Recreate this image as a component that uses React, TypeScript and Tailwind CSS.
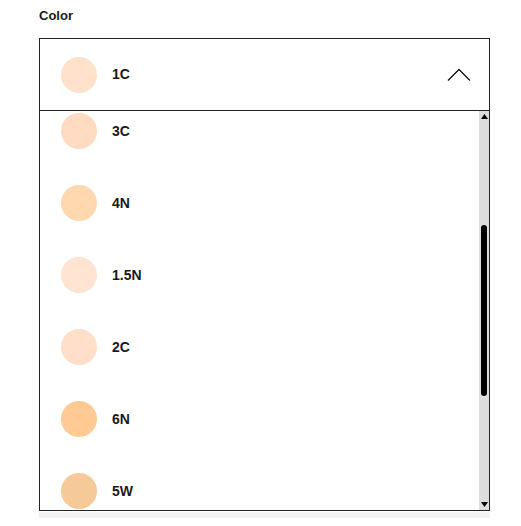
import { useEffect, useRef } from "react";

type Shade = { name: string; color: string };

const shades: Shade[] = [
  { name: "1W", color: "#ffe4d0" },
  { name: "2N", color: "#ffdcc4" },
  { name: "3N", color: "#ffd6b6" },
  { name: "3C", color: "#ffdbc2" },
  { name: "4N", color: "#ffd8b0" },
  { name: "1.5N", color: "#ffe5d1" },
  { name: "2C", color: "#ffdfca" },
  { name: "6N", color: "#ffca94" },
  { name: "5W", color: "#f6c998" },
  { name: "7N", color: "#efb57e" },
  { name: "8N", color: "#d9975e" },
  { name: "9N", color: "#b97a47" },
];

function Swatch({ color }: { color: string }) {
  return <span className="h-9 w-9 shrink-0 rounded-full" style={{ backgroundColor: color }} />;
}

export default function App() {
  const listRef = useRef<HTMLDivElement>(null);

  useEffect(() => {
    if (listRef.current) listRef.current.scrollTop = 3 * 72 + 16;
  }, []);

  return (
    <div className="min-h-[526px] bg-white pl-[39px] pt-[8px] text-[#1a1a1a] [font-family:'Liberation_Sans',Arial,sans-serif]">
      <div className="mb-[14px] text-[13px] font-bold leading-[16px]">Color</div>

      <div className="w-[451px] border border-[#222]">
        <button type="button" className="flex h-[72px] w-full items-center border-b border-[#222] pl-[21px] pr-[18px] text-left">
          <Swatch color="#ffe1cc" />
          <span className="ml-[15px] text-[14px] font-bold">1C</span>
          <svg className="ml-auto" width="24" height="14" viewBox="0 0 24 14" fill="none">
            <path d="M1 12.5 L12 1.5 L23 12.5" stroke="#111" strokeWidth="1.3" />
          </svg>
        </button>

        <div className="relative h-[399px]">
          <div
            ref={listRef}
            className="h-full overflow-y-scroll [scrollbar-width:none] [&::-webkit-scrollbar]:hidden"
          >
            {shades.map((s) => (
              <div key={s.name} className="flex h-[72px] items-center pl-[21px]">
                <Swatch color={s.color} />
                <span className="ml-[15px] text-[14px] font-bold">{s.name}</span>
              </div>
            ))}
          </div>

          <div className="absolute right-0 top-0 flex h-full w-[10px] flex-col items-center bg-[#dcdcdc]">
            <svg className="mt-[3px]" width="7" height="5" viewBox="0 0 7 5">
              <path d="M3.5 0 L7 5 L0 5 Z" fill="#000" />
            </svg>
            <div className="mt-[106px] h-[171px] w-[6px] rounded-full bg-black" />
            <svg className="mb-[3px] mt-auto" width="7" height="5" viewBox="0 0 7 5">
              <path d="M0 0 L7 0 L3.5 5 Z" fill="#000" />
            </svg>
          </div>
        </div>
      </div>

      <div className="mt-[1px] h-[6px] w-[451px] bg-[#f3f3f3]" />
    </div>
  );
}
